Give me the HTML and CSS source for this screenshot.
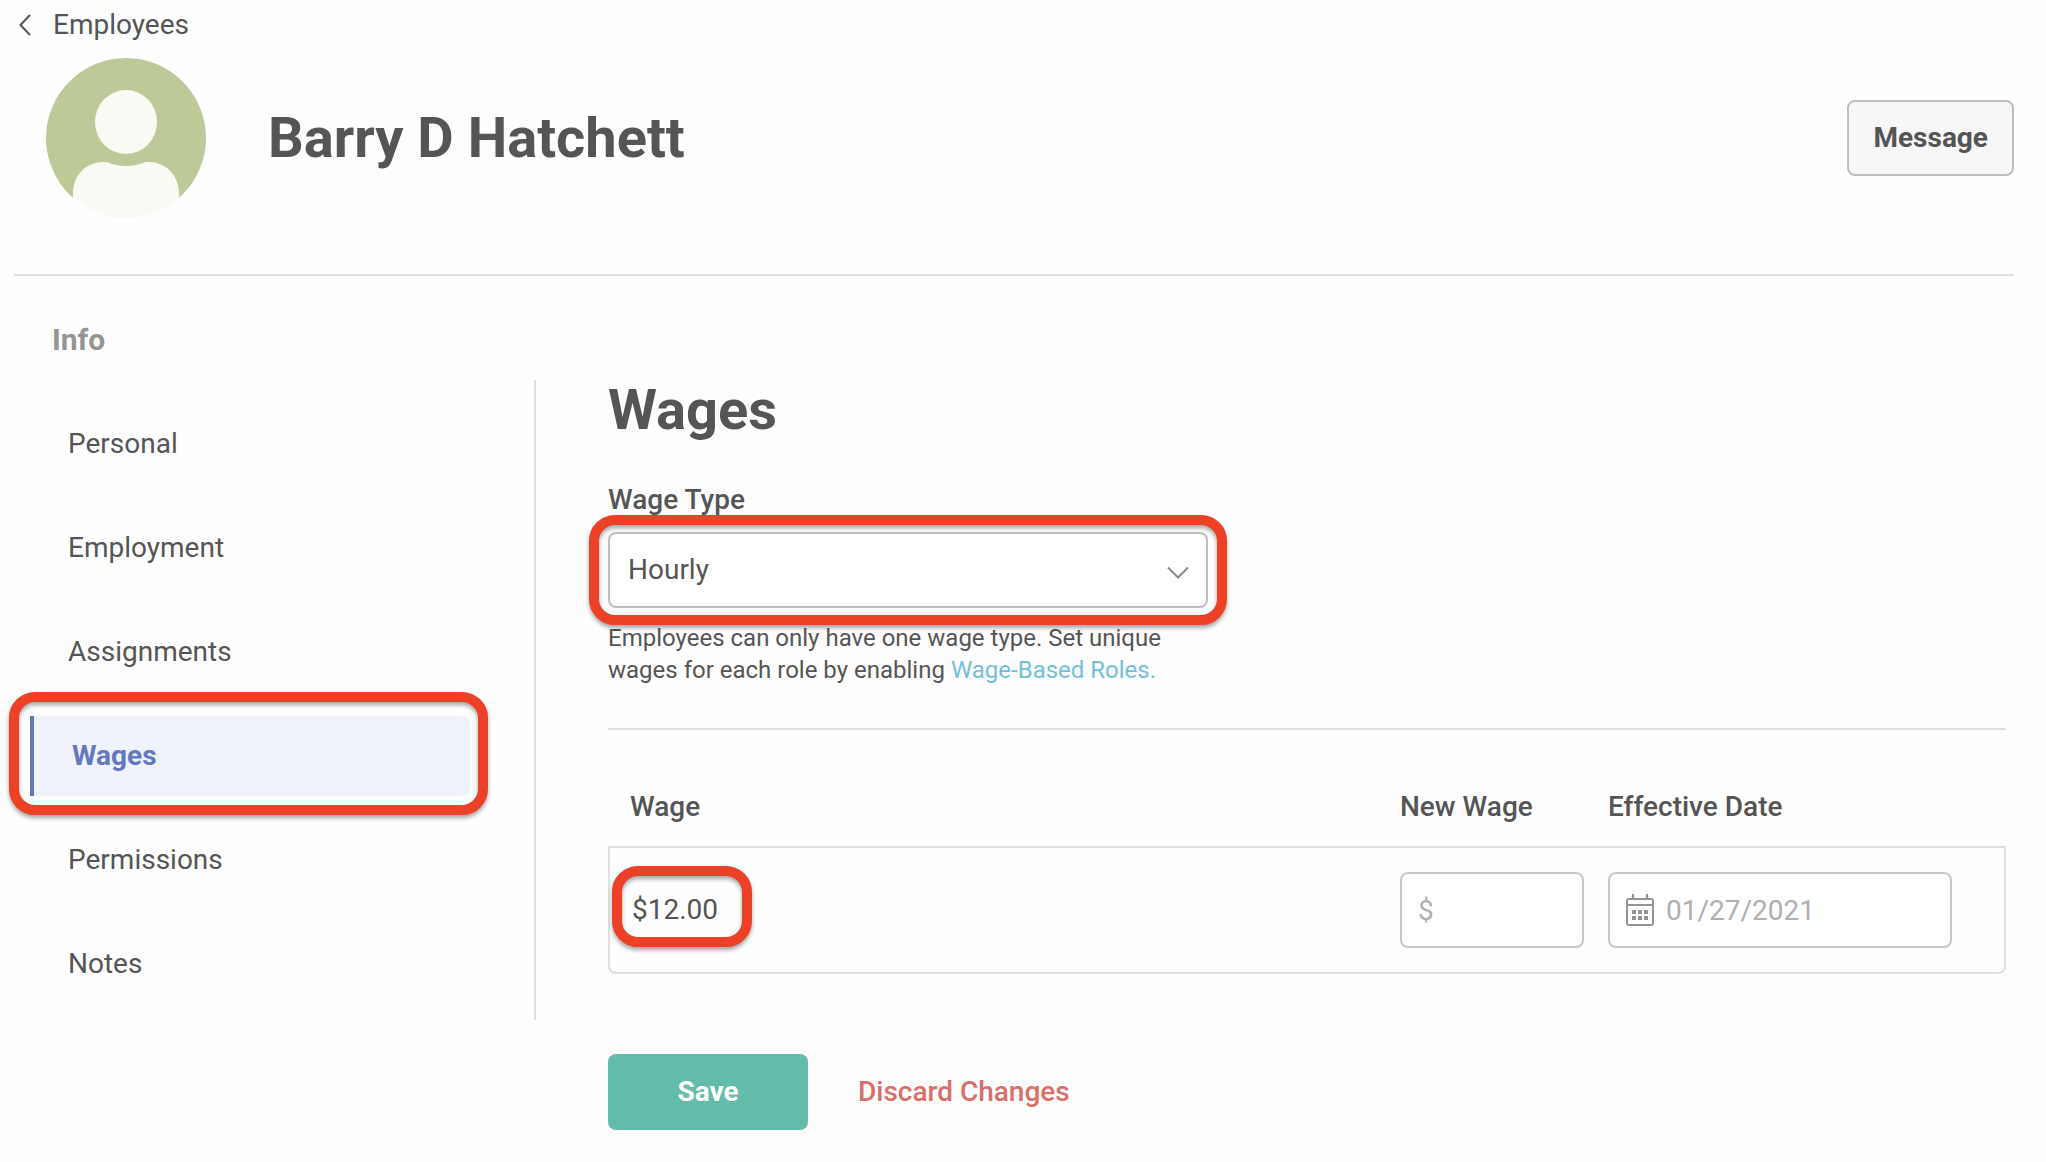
FILE: index.html
```html
<!DOCTYPE html>
<html lang="en">
<head>
    <meta charset="UTF-8">
    <meta name="viewport" content="width=device-width, initial-scale=1.0">
    <title>Barry D Hatchett - Wages</title>
    <link rel="stylesheet" href="styles.css">
</head>
<body>
    <a href="#" class="back-link">
        <svg class="back-icon" width="12" height="22" viewBox="0 0 12 22" fill="none" stroke="#555" stroke-width="2">
            <path d="M11 1 L1.500 11 L11 21"/>
        </svg>
        Employees
    </a>

    <header class="profile">
        <svg class="avatar" width="160" height="160" viewBox="0 0 160 160">
            <defs>
                <clipPath id="avatar-clip"><circle cx="80" cy="80" r="80"/></clipPath>
            </defs>
            <g clip-path="url(#avatar-clip)">
                <path d="M0 0 H160 V136 H0 Z" fill="#bdc998"/>
                <ellipse cx="80" cy="64" rx="31" ry="32" fill="#f9faf4"/>
                <path d="M27 160 V136 C27 116 41 104 58 104 C60 104 62 104 63 105 C74 109 86 109 97 105 C98 104 100 104 102 104 C119 104 133 116 133 136 V160 Z" fill="#f9faf4"/>
                <path d="M0 136 H27 V160 H0 Z M133 136 H160 V160 H133 Z" fill="#bdc998"/>
            </g>
        </svg>
        <h1>Barry D Hatchett</h1>
        <button type="button" class="btn message-btn">Message</button>
    </header>

    <div class="layout">
        <aside class="sidebar">
            <h2 class="sidebar-title">Info</h2>
            <nav class="nav">
                <a href="#" class="nav-item">Personal</a>
                <a href="#" class="nav-item">Employment</a>
                <a href="#" class="nav-item">Assignments</a>
                <a href="#" class="nav-item active">Wages<span class="highlight"></span></a>
                <a href="#" class="nav-item">Permissions</a>
                <a href="#" class="nav-item">Notes</a>
            </nav>
        </aside>

        <main class="content">
            <h1>Wages</h1>

            <form>
                <div class="wage-type">
                    <label for="wage-type">Wage Type</label>
                    <div class="select-wrap">
                        <select id="wage-type" class="input-field">
                            <option selected>Hourly</option>
                            <option>Salary</option>
                        </select>
                        <svg class="select-arrow" width="22" height="14" viewBox="0 0 22 14" fill="none" stroke="#888" stroke-width="2">
                            <path d="M1 1.500 L11 11.500 L21 1.500"/>
                        </svg>
                        <span class="highlight"></span>
                    </div>
                    <p class="help">Employees can only have one wage type. Set unique wages for each role by enabling <a href="#">Wage-Based Roles.</a></p>
                </div>

                <table class="wage-table">
                    <thead>
                        <tr>
                            <th>Wage</th>
                            <th class="col-new"><label for="new-wage">New Wage</label></th>
                            <th class="col-date"><label for="effective-date">Effective Date</label></th>
                        </tr>
                    </thead>
                    <tbody>
                        <tr>
                            <td><span class="amount">$12.00<span class="highlight"></span></span></td>
                            <td><input type="text" id="new-wage" class="input-field" placeholder="$"></td>
                            <td>
                                <div class="date-wrap">
                                    <svg class="calendar-icon" width="28" height="32" viewBox="0 0 28 32" fill="none" stroke="#939393" stroke-width="2">
                                        <rect x="1" y="5" width="26" height="26" rx="2"/>
                                        <path d="M1 11 H27 M7 0 V5 M21 0 V5"/>
                                        <path d="M6 18 H10 M12 18 H16 M18 18 H22 M6 24 H10 M12 24 H16 M18 24 H22" stroke-width="4"/>
                                    </svg>
                                    <input type="text" id="effective-date" class="input-field" placeholder="01/27/2021">
                                </div>
                            </td>
                        </tr>
                    </tbody>
                </table>

                <div class="actions">
                    <button type="submit" class="btn save-btn">Save</button>
                    <button type="reset" class="discard-btn">Discard Changes</button>
                </div>
            </form>
        </main>
    </div>
</body>
</html>
```
FILE: styles.css
```css
* {
    box-sizing: border-box;
}
body {
    font-family: Roboto, "Liberation Sans", sans-serif;
    font-size: 28px;
    line-height: 32px;
    color: #555;
    background-color: #fefefe;
    margin: 0;
    padding: 0 32px 32px 14px;
}
h1 {
    font-size: 56px;
    line-height: 64px;
    font-weight: 700;
    margin: 0;
}
a {
    color: inherit;
    text-decoration: none;
}
button,
input,
select {
    font: inherit;
    color: inherit;
}
.back-link {
    display: flex;
    align-items: center;
    gap: 22px;
    height: 50px;
    padding-left: 5px;
}
.profile {
    display: flex;
    align-items: center;
    gap: 62px;
    padding: 8px 0 56px 32px;
    border-bottom: 2px solid #dfdfdf;
}
.btn {
    height: 76px;
    border: none;
    border-radius: 8px;
    font-weight: 700;
    cursor: pointer;
}
.message-btn {
    margin-left: auto;
    padding: 0 24px;
    border: 2px solid #bebebe;
    background-color: #f7f7f7;
}
.layout {
    display: flex;
}
.sidebar {
    flex: 0 0 522px;
    padding-top: 44px;
}
.sidebar-title {
    margin: 0 0 20px;
    padding-left: 38px;
    font-size: 30px;
    line-height: 40px;
    font-weight: 700;
    color: #949494;
}
.nav {
    display: flex;
    flex-direction: column;
    gap: 24px;
    padding: 24px 64px 16px 16px;
    border-right: 2px solid #dfdfdf;
}
.nav-item {
    position: relative;
    display: flex;
    align-items: center;
    height: 80px;
    padding-left: 38px;
}
.nav-item.active {
    border-left: 4px solid #6478c0;
    border-radius: 0 8px 8px 0;
    background-color: #eff2fb;
    color: #6478c0;
    font-weight: 700;
}
/* red callout ring drawn round its parent */
.highlight {
    position: absolute;
    inset: -17px -19px;
    border: 10px solid #ec4127;
    border-radius: 26px;
    filter: drop-shadow(0 3px 2px rgba(0, 0, 0, 0.35));
    pointer-events: none;
}
.nav-item .highlight {
    inset: -24px -18px -19px -25px;
}
.content {
    flex: 1;
    min-width: 0;
    padding: 102px 8px 0 72px;
}
.wage-type {
    max-width: 600px;
    margin-top: 42px;
}
.wage-type label {
    display: block;
    margin-bottom: 16px;
    font-weight: 500;
}
.select-wrap,
.date-wrap {
    position: relative;
}
.input-field {
    display: block;
    width: 100%;
    height: 76px;
    padding: 0 16px;
    border: 2px solid #c8c8c8;
    border-radius: 8px;
    background-color: #fff;
}
.input-field::placeholder {
    color: #b0b0b0;
    opacity: 1;
}
select.input-field {
    appearance: none;
    padding: 0 18px;
    border-color: #bebebe;
}
.select-arrow {
    position: absolute;
    right: 19px;
    top: 34px;
    pointer-events: none;
}
.help {
    margin: 14px 0 0;
    font-size: 24px;
}
.help a {
    color: #72bfdd;
}
.wage-table {
    width: 100%;
    margin-top: 42px;
    border-top: 2px solid #dfdfdf;
    border-spacing: 0;
    table-layout: fixed;
}
.wage-table th {
    height: 116px;
    padding: 38px 0 0;
    text-align: left;
    font-weight: 500;
}
.wage-table th:first-child,
.wage-table td:first-child {
    padding-left: 22px;
}
.wage-table .col-new {
    width: 208px;
}
.wage-table .col-date {
    width: 398px;
}
.wage-table td {
    padding: 24px 24px 24px 0;
    border: 0 solid #dfdfdf;
    border-width: 2px 0;
}
.wage-table td:first-child {
    border-left-width: 2px;
    border-bottom-left-radius: 8px;
}
.wage-table td:last-child {
    padding-right: 52px;
    border-right-width: 2px;
    border-bottom-right-radius: 8px;
}
.amount {
    position: relative;
}
.amount .highlight {
    inset: -27px -34px -21px -20px;
}
.calendar-icon {
    position: absolute;
    left: 18px;
    top: 22px;
}
.date-wrap .input-field {
    padding-left: 56px;
}
.actions {
    display: flex;
    align-items: center;
    gap: 50px;
    margin-top: 80px;
}
.save-btn {
    width: 200px;
    background-color: #63bba9;
    color: #fff;
}
.discard-btn {
    padding: 0;
    border: none;
    background: none;
    color: #d96e6b;
    font-weight: 500;
    cursor: pointer;
}
```
